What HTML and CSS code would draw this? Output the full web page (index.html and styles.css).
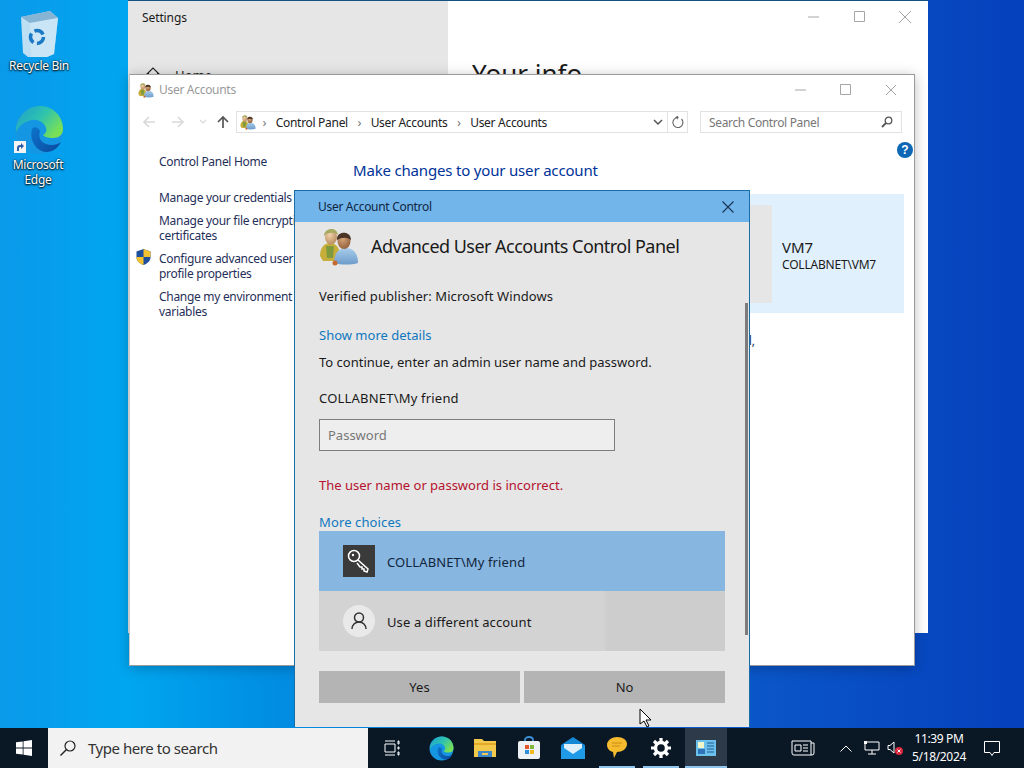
FILE: index.html
```html
<!DOCTYPE html>
<html lang="en">
<head>
<meta charset="utf-8">
<title>User Account Control</title>
<link rel="stylesheet" href="styles.css">
</head>
<body>
<svg class="defs" width="0" height="0">
  <defs>
    <radialGradient id="skin" cx="0.4" cy="0.35" r="0.7"><stop offset="0" stop-color="#f0d2ac"/><stop offset="1" stop-color="#b98a5c"/></radialGradient>
    <radialGradient id="skinB" cx="0.4" cy="0.35" r="0.7"><stop offset="0" stop-color="#d9a67a"/><stop offset="1" stop-color="#8f5f3c"/></radialGradient>
    <linearGradient id="shirt" x1="0" y1="0" x2="0" y2="1"><stop offset="0" stop-color="#a9cdec"/><stop offset="1" stop-color="#6d9cca"/></linearGradient>
    <linearGradient id="edgeA" x1="0" y1="0" x2="1" y2="0.6"><stop offset="0" stop-color="#1b9fd0"/><stop offset="0.55" stop-color="#2fc3ae"/><stop offset="1" stop-color="#79e055"/></linearGradient>
    <linearGradient id="edgeB" x1="0" y1="0" x2="1" y2="1"><stop offset="0" stop-color="#0d74cc"/><stop offset="1" stop-color="#0a4a9e"/></linearGradient>
    <symbol id="users" viewBox="0 0 40 40">
      <path d="M1 30c0-8 4-13 10-13s10 5 10 13l-3 5H4z" fill="#c7ad3a"/>
      <path d="M7 20h8l-1 12H8z" fill="#7f9a3e"/>
      <ellipse cx="12" cy="11" rx="6" ry="7.500" fill="url(#skin)"/>
      <path d="M5 10C5 2 18 0 19 9c-4-3-10-3-14 1z" fill="#a8aa62"/>
      <path d="M15 37c0-9 4-15 12-15s12 6 12 15c-7 2-17 2-24 0z" fill="url(#shirt)"/>
      <ellipse cx="25" cy="15" rx="6.500" ry="8" fill="url(#skinB)"/>
      <path d="M18 14c-1-9 14-10 14 0-4-3-9-3-14 0z" fill="#4b3526"/>
      <circle cx="16" cy="37" r="2.500" fill="#c9682e"/>
    </symbol>
    <symbol id="edge" viewBox="0 0 50 50">
      <circle cx="25" cy="25" r="24" fill="#1596e2"/>
      <path d="M2 23C4 10 14 1 26 1c13 0 23 10 23 23 0 6-4 9-10 9-5 0-9-1-10-3 3-2 4-4 3-7-2-6-8-9-14-8C12 16 6 19 2 27z" fill="url(#edgeA)"/>
      <path d="M18 24c-3 11 4 22 14 23 7 0 12-4 15-10-4 3-10 4-15 2-6-2-8-8-6-13-2-4-6-5-8-2z" fill="url(#edgeB)"/>
    </symbol>
  </defs>
</svg>

<div class="screen">
  <main class="desktop">
    <div class="desk-icon recycle">
      <svg class="recycle-svg" viewBox="0 0 44 50" width="44" height="50">
        <path d="M4 9 33 3l8 7-4 36-7 3H11l-5-4z" fill="#bcdff4"/>
        <path d="M4 9 33 3l8 7-28 5z" fill="#86b4d4"/>
        <path d="M13 15l28-5-4 36-7 3H14z" fill="#d3e9f6" opacity=".6"/>
        <circle cx="20" cy="29" r="6.500" class="recycle-mark"/>
      </svg>
      <span class="desk-label">Recycle Bin</span>
    </div>
    <div class="desk-icon edge-icon">
      <span class="edge-wrap">
        <svg width="50" height="50"><use href="#edge"/></svg>
        <svg class="shortcut" width="12" height="12" viewBox="0 0 12 12"><rect width="12" height="12" fill="#f4f4f4"/><path d="M3 10V7c0-2 1-3 3-3h1V2l3 3-3 3V6H6C5 6 5 7 5 8v2z" fill="#2a5ea8"/></svg>
      </span>
      <span class="desk-label">Microsoft<br>Edge</span>
    </div>

    <section class="win settings">
      <header class="settings-title">
        <span class="settings-name">Settings</span>
        <div class="caption caption-settings">
          <svg width="46" height="14" viewBox="0 0 46 14"><path d="M0 7h11" class="cap"/></svg>
          <svg width="44" height="14" viewBox="0 0 44 14"><path d="M.5 1.500h10v10H.5z" class="cap"/></svg>
          <svg width="14" height="14" viewBox="0 0 14 14"><path d="M1 1l12 12M13 1 1 13" class="cap"/></svg>
        </div>
      </header>
      <div class="settings-body">
        <nav class="settings-nav">
          <svg width="16" height="16" viewBox="0 0 16 16"><path d="M1 9l7-7 7 7M3.500 7v8h9V7" fill="none" stroke="#222" stroke-width="1.100"/></svg>
          <span>Home</span>
        </nav>
        <div class="settings-main"><h1>Your info</h1></div>
      </div>
    </section>

    <section class="win accounts">
      <header class="acc-title">
        <svg width="16" height="16"><use href="#users"/></svg>
        <span class="acc-name">User Accounts</span>
        <div class="caption caption-acc">
          <svg width="46" height="14" viewBox="0 0 46 14"><path d="M1 7h11" class="cap"/></svg>
          <svg width="44" height="14" viewBox="0 0 44 14"><path d="M.5 1.500h10v10H.5z" class="cap"/></svg>
          <svg width="14" height="14" viewBox="0 0 14 14"><path d="M2 2l10 10M12 2 2 12" class="cap"/></svg>
        </div>
      </header>
      <div class="acc-nav">
        <svg class="nav-arrow" width="14" height="14" viewBox="0 0 14 14"><path d="M13 7H2M7 2 2 7l5 5" fill="none" stroke="#d9d9d9" stroke-width="1.600"/></svg>
        <svg class="nav-arrow" width="14" height="14" viewBox="0 0 14 14"><path d="M1 7h11M7 2l5 5-5 5" fill="none" stroke="#d9d9d9" stroke-width="1.600"/></svg>
        <svg class="nav-drop" width="8" height="6" viewBox="0 0 8 6"><path d="M1 1l3 3 3-3" fill="none" stroke="#d9d9d9" stroke-width="1.200"/></svg>
        <svg class="nav-up" width="14" height="14" viewBox="0 0 14 14"><path d="M7 13V2M2 7l5-5 5 5" fill="none" stroke="#555" stroke-width="1.700"/></svg>
        <div class="address">
          <svg class="addr-icon" width="16" height="16"><use href="#users"/></svg>
          <span class="crumb-sep">›</span><span>Control Panel</span>
          <span class="crumb-sep">›</span><span>User Accounts</span>
          <span class="crumb-sep">›</span><span>User Accounts</span>
          <svg class="addr-drop" width="10" height="7" viewBox="0 0 10 7"><path d="M1 1l4 4 4-4" fill="none" stroke="#555" stroke-width="1.500"/></svg>
        </div>
        <div class="refresh">
          <svg width="12" height="12" viewBox="0 0 12 12"><path d="M9.500 3a5 5 0 1 1-3-1.500H4M6 0 4 1.500 6 3" fill="none" stroke="#666" stroke-width="1.100"/></svg>
        </div>
        <div class="search-box">
          <span>Search Control Panel</span>
          <svg width="12" height="12" viewBox="0 0 12 12"><circle cx="7.500" cy="4.500" r="3.300" fill="none" stroke="#555" stroke-width="1.300"/><path d="M5 7 1 11" stroke="#555" stroke-width="1.800"/></svg>
        </div>
      </div>
      <div class="acc-body">
        <aside class="acc-side">
          <a class="side-home">Control Panel Home</a>
          <a class="side-first">Manage your credentials</a>
          <a>Manage your file encryption<br>certificates</a>
          <a class="side-shield">
            <svg class="shield" width="15" height="16" viewBox="0 0 15 16">
              <path d="M7.500 0 14.500 2.500V8c0 4-3 6.500-7 8-4-1.500-7-4-7-8V2.500z" fill="#1e4f9c"/>
              <path d="M7.500 0 14.500 2.500V8H7.500zM7.500 8v8c-4-1.500-7-4-7-8z" fill="#f2c230"/>
            </svg>
            Configure advanced user<br>profile properties
          </a>
          <a>Change my environment<br>variables</a>
        </aside>
        <div class="acc-main">
          <h2>Make changes to your user account</h2>
          <div class="user-card">
            <div class="avatar"></div>
            <div class="user-text">
              <span class="user-name">VM7</span>
              <span class="user-domain">COLLABNET\VM7</span>
            </div>
          </div>
          <p class="acc-note">Changes apply to this user's account on the local,</p>
        </div>
        <svg class="help" width="16" height="16" viewBox="0 0 16 16"><circle cx="8" cy="8" r="8" fill="#0d67b5"/><text x="8" y="12" class="help-q">?</text></svg>
      </div>
    </section>

    <section class="uac">
      <header class="uac-title">
        <span>User Account Control</span>
        <svg width="12" height="12" viewBox="0 0 12 12"><path d="M.5.5l11 11M11.500.5l-11 11" stroke="#1a3350" stroke-width="1.100"/></svg>
      </header>
      <div class="uac-body">
        <div class="uac-head">
          <svg width="40" height="40"><use href="#users"/></svg>
          <h3>Advanced User Accounts Control Panel</h3>
        </div>
        <p class="line publisher">Verified publisher: Microsoft Windows</p>
        <a class="line link details">Show more details</a>
        <p class="line prompt">To continue, enter an admin user name and password.</p>
        <p class="line account">COLLABNET\My friend</p>
        <div class="password">Password</div>
        <p class="line error">The user name or password is incorrect.</p>
        <a class="line link more">More choices</a>
        <div class="choice selected">
          <span class="key-tile">
            <svg width="26" height="26" viewBox="0 0 26 26"><circle cx="8" cy="8" r="5.500" fill="none" stroke="#fff" stroke-width="1.500"/><circle cx="7" cy="7" r="1.200" fill="#fff"/><path d="M12 12l10 9-1 3-3-1v-2h-2v-2h-2l-3-4" fill="none" stroke="#fff" stroke-width="1.500"/></svg>
          </span>
          <span class="choice-text">COLLABNET\My friend</span>
        </div>
        <div class="choice other">
          <span class="person-tile">
            <svg width="16" height="18" viewBox="0 0 16 18"><circle cx="8" cy="5.500" r="4.500" fill="none" stroke="#333" stroke-width="1.500"/><path d="M1 17c0-4 3-7 7-7s7 3 7 7" fill="none" stroke="#333" stroke-width="1.500"/></svg>
          </span>
          <span class="choice-text">Use a different account</span>
        </div>
        <div class="uac-buttons">
          <button class="btn">Yes</button>
          <button class="btn">No</button>
        </div>
      </div>
      <div class="uac-scroll"></div>
    </section>

    <svg class="cursor" width="14" height="20" viewBox="0 0 14 20"><path d="M1 1v15l4-3 3 6 2-1-3-6h5z" fill="#fff" stroke="#000" stroke-width="1"/></svg>
  </main>

  <footer class="taskbar">
    <div class="start">
      <svg width="16" height="16" viewBox="0 0 16 16"><path d="M0 2.300 6.700 1.400V7.600H0zM7.500 1.300 16 0V7.600H7.500zM0 8.400H6.700V14.600L0 13.700zM7.500 8.400H16V16L7.500 14.700z" fill="#fff"/></svg>
    </div>
    <div class="task-search">
      <svg width="18" height="18" viewBox="0 0 18 18"><circle cx="11" cy="7" r="5" fill="none" stroke="#222" stroke-width="1.200"/><path d="M7.500 10.500 1.500 16.500" stroke="#222" stroke-width="1.500"/></svg>
      <span>Type here to search</span>
    </div>
    <div class="task-apps">
      <span class="app taskview"><svg width="16" height="16" viewBox="0 0 16 16"><path d="M1 1h10M1 15h10M1 4h10v8H1zM14 1h1v3h-1zM14 7h1v2h-1zM14 12h1v3h-1z" fill="none" stroke="#fff" stroke-width="1"/></svg></span>
      <span class="app gap-edge"><svg width="25" height="25"><use href="#edge"/></svg></span>
      <span class="app"><svg width="22" height="20" viewBox="0 0 22 20"><path d="M0 1h8l2 2h12v16H0z" fill="#f2c94a"/><path d="M0 5h22v2H0z" fill="#e3a92a"/><path d="M4 13h14v6H4z" fill="#3f86c9"/><path d="M8 15h6v2H8z" fill="#f2c94a"/></svg></span>
      <span class="app"><svg width="24" height="24" viewBox="0 0 24 24"><path d="M8 6V4c0-4 8-4 8 0v2" fill="none" stroke="#3d8fd6" stroke-width="1.800"/><rect x="1" y="5" width="22" height="18" rx="2" fill="#eef1f3"/><rect x="8" y="9" width="4" height="4" fill="#e2562e"/><rect x="13" y="9" width="4" height="4" fill="#7fb73a"/><rect x="8" y="14" width="4" height="4" fill="#2f8ed8"/><rect x="13" y="14" width="4" height="4" fill="#f2b81f"/></svg></span>
      <span class="app"><svg width="26" height="22" viewBox="0 0 26 22"><path d="M1 8 13 0l12 8v14H1z" fill="#1689d6"/><path d="M4 7h18v6l-9 5-9-5z" fill="#dff0fb"/><path d="M1 9l12 8 12-8v13H1z" fill="#1f9ae6"/></svg></span>
      <span class="app running"><svg width="22" height="24" viewBox="0 0 22 24"><path d="M11 1c6 0 10 3 10 7 0 5-5 8-10 8l-3 6-1-6C3 15 1 12 1 9c0-4 4-8 10-8z" fill="#f6bb2e"/><path d="M6 7h10M6 10h8" stroke="#c98c12" stroke-width="1"/></svg></span>
      <span class="app running"><svg width="20" height="20" viewBox="0 0 20 20"><circle cx="10" cy="10" r="5.500" fill="none" stroke="#fff" stroke-width="3.400"/><path d="M10 0v4M10 16v4M0 10h4M16 10h4M3 3l3 3M14 14l3 3M17 3l-3 3M6 14l-3 3" stroke="#fff" stroke-width="3.200"/></svg></span>
      <span class="app running active"><svg width="20" height="16" viewBox="0 0 20 16"><rect width="20" height="16" fill="#6cc0ec"/><rect x="2" y="2" width="6" height="6" fill="#f2f5c8"/><rect x="2" y="9" width="7" height="5" fill="#2f74b8"/><path d="M11 3h7M11 6h7M11 9h7M11 12h7" stroke="#1f5d9b" stroke-width="1.200"/></svg></span>
    </div>
    <div class="tray">
      <svg class="tray-news" width="24" height="16" viewBox="0 0 24 16"><path d="M1 1h19v14H3a2 2 0 0 1-2-2zM20 3h3v10a2 2 0 0 1-2 2h-1M4 5h6v6H4zM12 5h5M12 8h5M12 11h5" fill="none" stroke="#fff" stroke-width="1"/></svg>
      <svg class="tray-chev" width="12" height="7" viewBox="0 0 12 7"><path d="M.5 6.500 6 1l5.500 5.500" fill="none" stroke="#fff" stroke-width="1"/></svg>
      <svg class="tray-net" width="16" height="14" viewBox="0 0 16 14"><path d="M3 1h12v8H1V3M8 9v4M4 13h8" fill="none" stroke="#fff" stroke-width="1"/><rect x="0" y="0" width="3" height="3" fill="#fff"/></svg>
      <svg class="tray-vol" width="16" height="14" viewBox="0 0 16 14"><path d="M1 4.500h2L7 1v11L3 8.500H1z" fill="none" stroke="#fff" stroke-width="1"/><circle cx="12" cy="10" r="4" fill="#d9263d"/><path d="M10.500 8.500l3 3M13.500 8.500l-3 3" stroke="#fff" stroke-width="1"/></svg>
      <div class="clock"><span>11:39 PM</span><span>5/18/2024</span></div>
      <svg class="tray-note" width="16" height="15" viewBox="0 0 16 15"><path d="M.5.500h15v11H10l-2 3-2-3H.5z" fill="none" stroke="#fff" stroke-width="1"/></svg>
    </div>
  </footer>
</div>
</body>
</html>
```
FILE: styles.css
```css
* { box-sizing: border-box; }
html, body { margin: 0; padding: 0; }
body { width: 1024px; height: 768px; overflow: hidden; font-family: "Noto Sans", "Open Sans", sans-serif; color: #1a1a1a; }
p, h1, h2, h3 { margin: 0; font-weight: 400; }
.defs { position: absolute; }
.screen { display: flex; flex-direction: column; width: 1024px; height: 768px; }
.desktop { position: relative; flex: 1; overflow: hidden; background: linear-gradient(90deg, #0a9aea 0, #00a6f0 12.500%, #0090e4 25%, #0a6ed2 50%, #0a55c8 75%, #0540bc 100%); }

.desk-icon { position: absolute; display: flex; flex-direction: column; align-items: center; width: 76px; }
.recycle { left: 1px; top: 8px; }
.edge-icon { left: 0; top: 105px; }
.recycle-mark { fill: none; stroke: #1b78c4; stroke-width: 3.500; stroke-dasharray: 10 3.600; }
.edge-wrap { position: relative; display: block; width: 50px; height: 52px; margin-left: 2px; }
.shortcut { position: absolute; left: 0; bottom: 4px; }
.desk-label { color: #fff; font-size: 12px; line-height: 15px; text-align: center; text-shadow: 0 1px 2px #000, 0 0 2px #000; letter-spacing: -.3px; }

.win { position: absolute; background: #fff; }
.settings { left: 128px; top: 0; width: 800px; height: 633px; border-top: 1px solid #14517f; display: flex; flex-direction: column; }
.settings-title { display: flex; align-items: center; height: 32px; padding-left: 14px; position: relative; z-index: 1; }
.settings-name { font-size: 12px; letter-spacing: -.1px; }
.caption { display: flex; align-items: center; margin-left: auto; }
.caption-settings { padding-right: 16px; }
.cap { fill: none; stroke: #a6a6a6; stroke-width: 1; }
.settings-body { display: flex; flex: 1; margin-top: -32px; }
.settings-nav { display: flex; align-items: flex-start; gap: 14px; width: 320px; height: 100%; background: #e6e6e6; padding: 65px 0 0 17px; font-size: 13px; }
.settings-main { padding: 54px 0 0 24px; }
.settings-main h1 { font-size: 26px; line-height: 36px; }

.accounts { left: 129px; top: 74px; width: 786px; height: 592px; border: 1px solid #9a9a9a; border-left-color: #c8c8c8; box-shadow: 0 2px 12px rgba(0,0,0,.25); display: flex; flex-direction: column; }
.acc-title { display: flex; align-items: center; height: 29px; padding-left: 8px; flex: none; }
.acc-name { font-size: 12px; color: #9a9a9a; margin-left: 5px; letter-spacing: -.3px; }
.caption-acc { padding-right: 16px; }
.acc-nav { display: flex; align-items: center; height: 24px; margin-top: 6px; padding-left: 12px; flex: none; }
.nav-arrow { margin-right: 15px; }
.nav-drop { margin-left: -1px; margin-right: 9px; }
.nav-up { margin-right: 6px; }
.address { display: flex; align-items: center; gap: 9.500px; width: 432px; height: 22px; border: 1px solid #e2e2e2; padding: 0 4px 0 3px; font-size: 12px; letter-spacing: -.3px; color: #222; white-space: nowrap; }
.addr-icon { margin-right: -3px; }
.crumb-sep { color: #777; font-size: 13px; }
.addr-drop { margin-left: auto; }
.refresh { display: flex; align-items: center; justify-content: center; width: 20px; height: 22px; border: 1px solid #e2e2e2; border-left: 0; }
.search-box { display: flex; align-items: center; justify-content: space-between; width: 202px; height: 22px; margin-left: 12px; border: 1px solid #e2e2e2; padding: 0 8px; font-size: 12px; letter-spacing: -.35px; color: #777; }
.acc-body { position: relative; display: flex; flex: 1; }
.acc-side { display: flex; flex-direction: column; width: 223px; padding: 20px 0 0 29px; font-size: 12px; letter-spacing: -.3px; line-height: 15px; color: #1f2f5a; white-space: nowrap; overflow: hidden; }
.acc-side a { display: block; position: relative; margin-bottom: 8px; }
.side-home { margin-bottom: 21px !important; }
.shield { position: absolute; left: -23px; top: -2px; }
.acc-main { flex: 1; padding-top: 26px; }
.acc-main h2 { font-size: 15px; line-height: 20px; letter-spacing: -.18px; color: #003399; }
.user-card { display: flex; align-items: center; height: 119px; margin-top: 14px; margin-right: 10px; background: #e1f0fd; }
.avatar { width: 419px; height: 98px; background: #e6e6e6; }
.user-text { display: flex; flex-direction: column; margin-left: 10px; margin-top: 2px; }
.user-name { font-size: 15px; line-height: 20px; }
.user-domain { font-size: 12px; line-height: 16px; letter-spacing: -.2px; }
.acc-note { width: 402px; margin-top: 20px; font-size: 12px; line-height: 16px; text-align: right; white-space: nowrap; color: #1f2f5a; }
.help { position: absolute; right: 1px; top: 8px; }
.help-q { fill: #fff; font-size: 12px; font-weight: 700; text-anchor: middle; font-family: "Liberation Sans", sans-serif; }

.uac { position: absolute; left: 294px; top: 190px; width: 456px; height: 537px; background: #e6e6e6; border: 1px solid #1a6ea8; border-bottom: 0; display: flex; flex-direction: column; }
.uac-title { display: flex; align-items: center; justify-content: space-between; height: 31px; flex: none; background: #71b5ea; padding: 0 15px 0 23px; font-size: 12px; letter-spacing: -.3px; color: #10253f; }
.uac-body { display: flex; flex-direction: column; padding: 5px 24px 0; font-size: 13px; color: #1a1a1a; }
.uac-head { display: flex; align-items: center; gap: 12px; height: 38px; }
.uac-head h3 { font-size: 18px; letter-spacing: -.53px; line-height: 38px; white-space: nowrap; }
.line { display: block; line-height: 18px; white-space: nowrap; }
.publisher { margin-top: 22px; letter-spacing: .08px; }
.link { color: #0f78bf; }
.details { margin-top: 21px; }
.prompt { margin-top: 9px; }
.account { margin-top: 18px; letter-spacing: .2px; }
.password { width: 296px; height: 32px; margin-top: 12px; border: 1px solid #7d7d7d; background: #eeeeee; padding: 0 8px; line-height: 31px; color: #777; flex: none; }
.error { margin-top: 25px; color: #b5122e; }
.more { margin-top: 19px; height: 18px; letter-spacing: .12px; }
.choice { display: flex; align-items: center; gap: 12px; height: 60px; width: 406px; padding-left: 24px; flex: none; }
.choice-text { padding-top: 1px; letter-spacing: .12px; }
.selected { background: #87b6e0; color: #12253c; }
.other { background: linear-gradient(90deg, #d3d3d3 0, #d3d3d3 70%, #cdcdcd 71%); }
.key-tile { display: flex; align-items: center; justify-content: center; width: 32px; height: 32px; background: #3a3a3a; }
.person-tile { display: flex; align-items: center; justify-content: center; width: 32px; height: 32px; border-radius: 50%; background: #e9e9e9; }
.uac-buttons { display: flex; gap: 4px; width: 406px; margin-top: 20px; }
.btn { flex: 1; height: 32px; border: 0; background: #b4b4b4; font: inherit; color: #1a1a1a; padding: 0; }
.uac-scroll { position: absolute; right: 1px; top: 112px; width: 3px; height: 332px; background: #7c7c7c; }
.cursor { position: absolute; left: 639px; top: 708px; }

.taskbar { display: flex; align-items: center; height: 40px; flex: none; background: #0a1724; color: #fff; }
.start { display: flex; align-items: center; justify-content: center; width: 48px; height: 40px; flex: none; }
.task-search { display: flex; align-items: center; gap: 11px; width: 320px; height: 40px; flex: none; background: #f2f2f2; padding-left: 11px; font-size: 15px; letter-spacing: -.45px; color: #333; }
.task-apps { display: flex; align-items: center; height: 40px; flex: none; }
.app { display: flex; align-items: center; justify-content: center; width: 44px; height: 40px; position: relative; }
.taskview { width: 48px; }
.gap-edge { margin-left: 3px; }
.running::after { content: ""; position: absolute; left: 4px; right: 4px; bottom: 0; height: 2px; background: #8fc4ec; }
.active { background: #2d3a49; width: 42px; margin-left: 2px; }
.active::after { left: 0; right: 0; }
.tray { display: flex; align-items: center; height: 40px; flex: none; padding-left: 64px; }
.tray-news { margin-right: 25px; flex: none; }
.tray-chev { margin-right: 12px; flex: none; }
.tray-net { margin-right: 7px; flex: none; }
.tray-vol { margin-right: 2px; flex: none; }
.clock { display: flex; flex-direction: column; align-items: center; font-size: 12px; letter-spacing: -.35px; line-height: 18px; width: 68px; flex: none; }
.tray-note { margin-left: 11px; flex: none; }
```
